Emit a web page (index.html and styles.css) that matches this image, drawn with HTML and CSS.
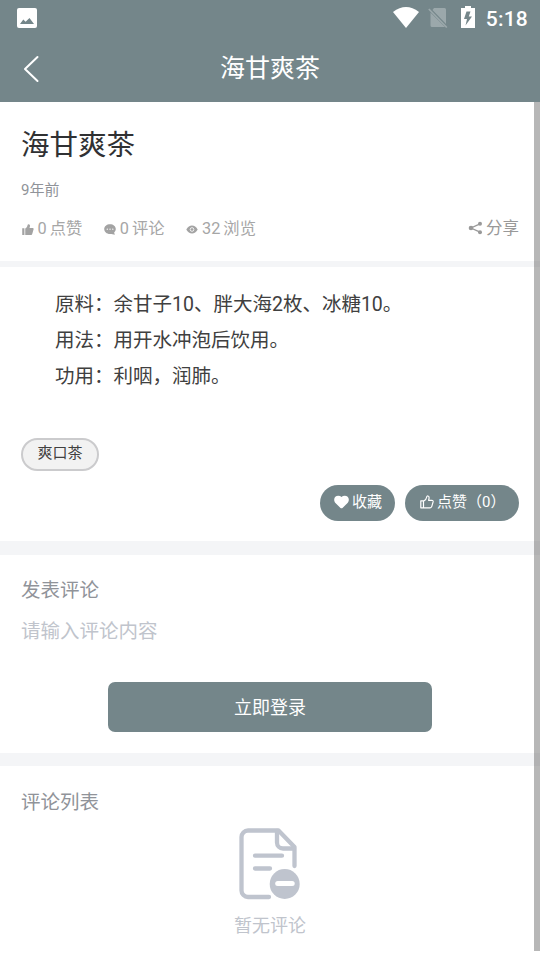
FILE: index.html
```html
<!DOCTYPE html>
<html lang="zh-CN">
<head>
<meta charset="utf-8">
<title>海甘爽茶</title>
<link rel="stylesheet" href="styles.css">
</head>
<body>
<header class="top">
  <div class="status">
    <svg class="picture" width="20" height="20" viewBox="0 0 20 20"><rect width="20" height="20" rx="2" fill="#fff"/><path d="M3 16l3.300-4.500 2.300 2.300L12.500 10l4.500 6z" fill="#74868a"/></svg>
    <div class="status-right">
      <svg width="26" height="21" viewBox="0 0 26 21"><path d="M0 5Q13-5 26 5L13 21z" fill="#fff"/></svg>
      <svg class="sim" width="20" height="22" viewBox="0 0 20 22"><path d="M6 1h10.500a1.500 1.500 0 0 1 1.500 1.500V17L4.500 3zM2.500 5.500L17 20H4a1.500 1.500 0 0 1-1.500-1.500z" fill="#9ba8ab"/><path d="M.8 2l18 18.500" stroke="#9ba8ab" stroke-width="1.700"/></svg>
      <svg class="battery" width="14" height="22" viewBox="0 0 14 22"><path d="M4 0h6v2h4v20H0V2h4z" fill="#fff"/><path d="M9.500 5.500H5.500L3 13h3l-1.500 6.500L11 10.500H7.800z" fill="#74868a"/></svg>
      <span class="clock">5:18</span>
    </div>
  </div>
  <nav class="nav">
    <svg class="back" width="18" height="28" viewBox="0 0 18 28"><path d="M14.500 2L2 14 14.500 26" fill="none" stroke="#fff" stroke-width="2" stroke-linecap="round" stroke-linejoin="round"/></svg>
    <span class="nav-title">海甘爽茶</span>
  </nav>
</header>
<main class="page">
  <section class="intro">
    <h1>海甘爽茶</h1>
    <div class="time">9年前</div>
    <div class="stats">
      <span class="stat"><svg width="12" height="11" viewBox="0 0 13 12"><path d="M.2 4.500h2.400V12H.2zM3.500 5C5.500 4 5.800 2.500 6 1.200 6.200-.3 8.700-.1 8.700 2c0 1-.4 1.700-.5 2.300h3.200c1 0 1.400.7 1.200 1.500L11.200 10.600c-.2.900-.8 1.400-1.700 1.400h-6z" fill="#a3a3a3"/></svg>0 点赞</span>
      <span class="stat"><svg width="12" height="11" viewBox="0 0 13 12"><path d="M6.500.3c3.600 0 6.300 2.300 6.300 5.200 0 1.500-.8 2.900-1.800 3.900l.8 2.300L8 10.800c-4.400.8-7.800-1.900-7.800-5.300C.2 2.600 2.900.3 6.500.3z" fill="#a3a3a3"/><path d="M3.500 5.700h.1m2.900 0h.1m2.900 0h.1" stroke="#fff" stroke-width="1.400" stroke-linecap="round"/></svg>0 评论</span>
      <span class="stat"><svg width="12" height="11" viewBox="0 0 13 12"><path d="M.3 6C3.300.3 9.700.3 12.700 6 9.700 11.700 3.300 11.700.3 6z" fill="#a3a3a3"/><circle cx="6.500" cy="6" r="2" fill="#a3a3a3" stroke="#fff" stroke-width=".9"/></svg>32 浏览</span>
      <span class="stat share"><svg width="15" height="14" viewBox="0 0 15 14"><path d="M12 2.800L3 7l9 4.200" fill="none" stroke="#999" stroke-width="1.300"/><g fill="#999"><circle cx="12" cy="2.800" r="2"/><circle cx="3" cy="7" r="2.300"/><circle cx="12" cy="11.200" r="2"/></g></svg>分享</span>
    </div>
  </section>
  <section class="detail">
    <div class="recipe">
      <p>原料：余甘子10、胖大海2枚、冰糖10。</p>
      <p>用法：用开水冲泡后饮用。</p>
      <p>功用：利咽，润肺。</p>
    </div>
    <span class="tag">爽口茶</span>
    <div class="actions">
      <button class="pill collect"><svg width="15" height="14" viewBox="0 0 15 14"><path d="M6.500 12.900L1.700 8.300C-1.500 4.500.8.800 4.200.8c1.400 0 2.500.4 3.300 1.200C8.300 1.200 9.400.8 10.800.8c3.400 0 5.700 3.700 2.500 7.500l-4.800 4.600q-1 .9-2 0z" fill="#fff"/></svg>收藏</button>
      <button class="pill like"><svg width="14" height="14" viewBox="0 0 14 14"><path d="M.8 5.800h2.700v7H.8zM3.500 6.300C6 5 6.500 3.500 6.700 2 6.900.3 9.100.7 9.100 2.700c0 1-.4 1.800-.5 2.600h3.200c1.100 0 1.500.7 1.300 1.600l-1.300 4.500c-.3 1-.8 1.400-1.700 1.400H3.500z" fill="none" stroke="#fff" stroke-width="1.200" stroke-linejoin="round"/></svg>点赞（0）</button>
    </div>
  </section>
  <section class="compose">
    <h2>发表评论</h2>
    <div class="placeholder">请输入评论内容</div>
    <button class="login">立即登录</button>
  </section>
  <section class="comments">
    <h2>评论列表</h2>
    <div class="empty">
      <svg width="62" height="72" viewBox="0 0 62 72"><g fill="none" stroke="#bfc4ce" stroke-width="4.300" stroke-linecap="round" stroke-linejoin="round"><path d="M30 69H9a6.500 6.500 0 0 1-6.500-6.500V9A6.500 6.500 0 0 1 9 2.500H39.500L55.500 19V38"/><path d="M38 3v11.500a6 6 0 0 0 6 6H55"/><path d="M16 27.700h27M16 40.500h15"/></g><circle cx="45.700" cy="56" r="15" fill="#bfc4ce"/><path d="M38.700 55.500h14.500" stroke="#fff" stroke-width="5" stroke-linecap="round"/></svg>
      <span>暂无评论</span>
    </div>
  </section>
  <div class="scrollbar"></div>
</main>
</body>
</html>
```
FILE: styles.css
```css
* { box-sizing: border-box; }
body {
  margin: 0;
  height: 960px;
  overflow: hidden;
  background: #fff;
  color: #404040;
  font-family: Roboto, "Noto Sans CJK SC", sans-serif;
}
h1, h2, p { margin: 0; font-weight: 400; }
svg { display: block; flex: none; }
button { border: 0; padding: 0; font: inherit; color: #fff; background: #74868a; }
.top { height: 102px; background: #74868a; color: #fff; }
.status { height: 36px; display: flex; justify-content: space-between; padding: 0 12px 0 17px; }
.picture { margin-top: 8px; }
.status-right { display: flex; align-items: flex-start; padding-top: 7px; }
.sim { margin-left: 9px; }
.battery { margin: -1px 11px 0 13px; }
.clock { font-size: 21px; line-height: 24px; font-weight: 500; letter-spacing: .2px; }
.nav { height: 66px; display: grid; grid-template-columns: 60px 1fr 60px; align-items: center; }
.back { margin-left: 23px; }
.nav-title { text-align: center; font-size: 25px; line-height: 36px; margin-top: 0; }
.page { position: relative; height: 849px; }
.intro { height: 165px; padding: 24px 21px 0; border-bottom: 6px solid #f4f5f7; }
h1 { font-size: 28.5px; line-height: 40px; color: #303133; }
.time { margin-top: 13px; font-size: 15px; line-height: 22px; color: #909399; }
.stats { display: flex; margin-top: 16px; gap: 21px; font-size: 16.3px; line-height: 24px; color: #a6a6a6; }
.stat { display: flex; align-items: center; gap: 4px; white-space: nowrap; word-spacing: -1px; }
.stat svg { margin: 0 0 0 .5px; }
.share { margin-left: auto; color: #999; font-size: 16.5px; }
.share svg { margin: 0 -1px 2px 0; }
.detail { height: 288px; padding: 20px 21px 0; border-bottom: 14px solid #f4f5f7; }
.recipe { padding-left: 34px; font-size: 19.5px; line-height: 36px; }
.tag {
  display: block;
  width: 78px;
  height: 33px;
  margin-top: 43px;
  border: 2px solid #cbcbcd;
  border-radius: 17px;
  background: #f2f2f2;
  font-size: 15px;
  line-height: 27px;
  text-align: center;
}
.actions { display: flex; justify-content: flex-end; gap: 10px; margin-top: 13.5px; }
.pill { display: flex; align-items: center; height: 36px; padding-bottom: 5px; border-radius: 18px; font-size: 15px; gap: 3px; }
.pill svg { margin-top: 3px; }
.collect { width: 75px; padding-left: 14px; }
.like { width: 114px; padding-left: 15px; }
.compose { height: 211px; padding: 21px 21px 0; border-bottom: 13px solid #f4f5f7; }
h2 { font-size: 19.5px; line-height: 29px; color: #909399; }
.placeholder { margin-top: 12px; font-size: 19.5px; line-height: 29px; color: #c0c4cc; }
.login { display: block; width: 324px; height: 50px; margin: 36px auto 0; padding-bottom: 3px; border-radius: 7px; font-size: 18px; }
.comments { padding: 22px 21px 0; }
.empty { display: flex; flex-direction: column; align-items: center; margin-top: 11px; font-size: 18px; line-height: 28px; color: #c0c4cc; gap: 12px; }
.scrollbar { position: absolute; top: 0; right: 0; width: 6px; height: 849px; background: rgba(90, 90, 90, .44); }
```
